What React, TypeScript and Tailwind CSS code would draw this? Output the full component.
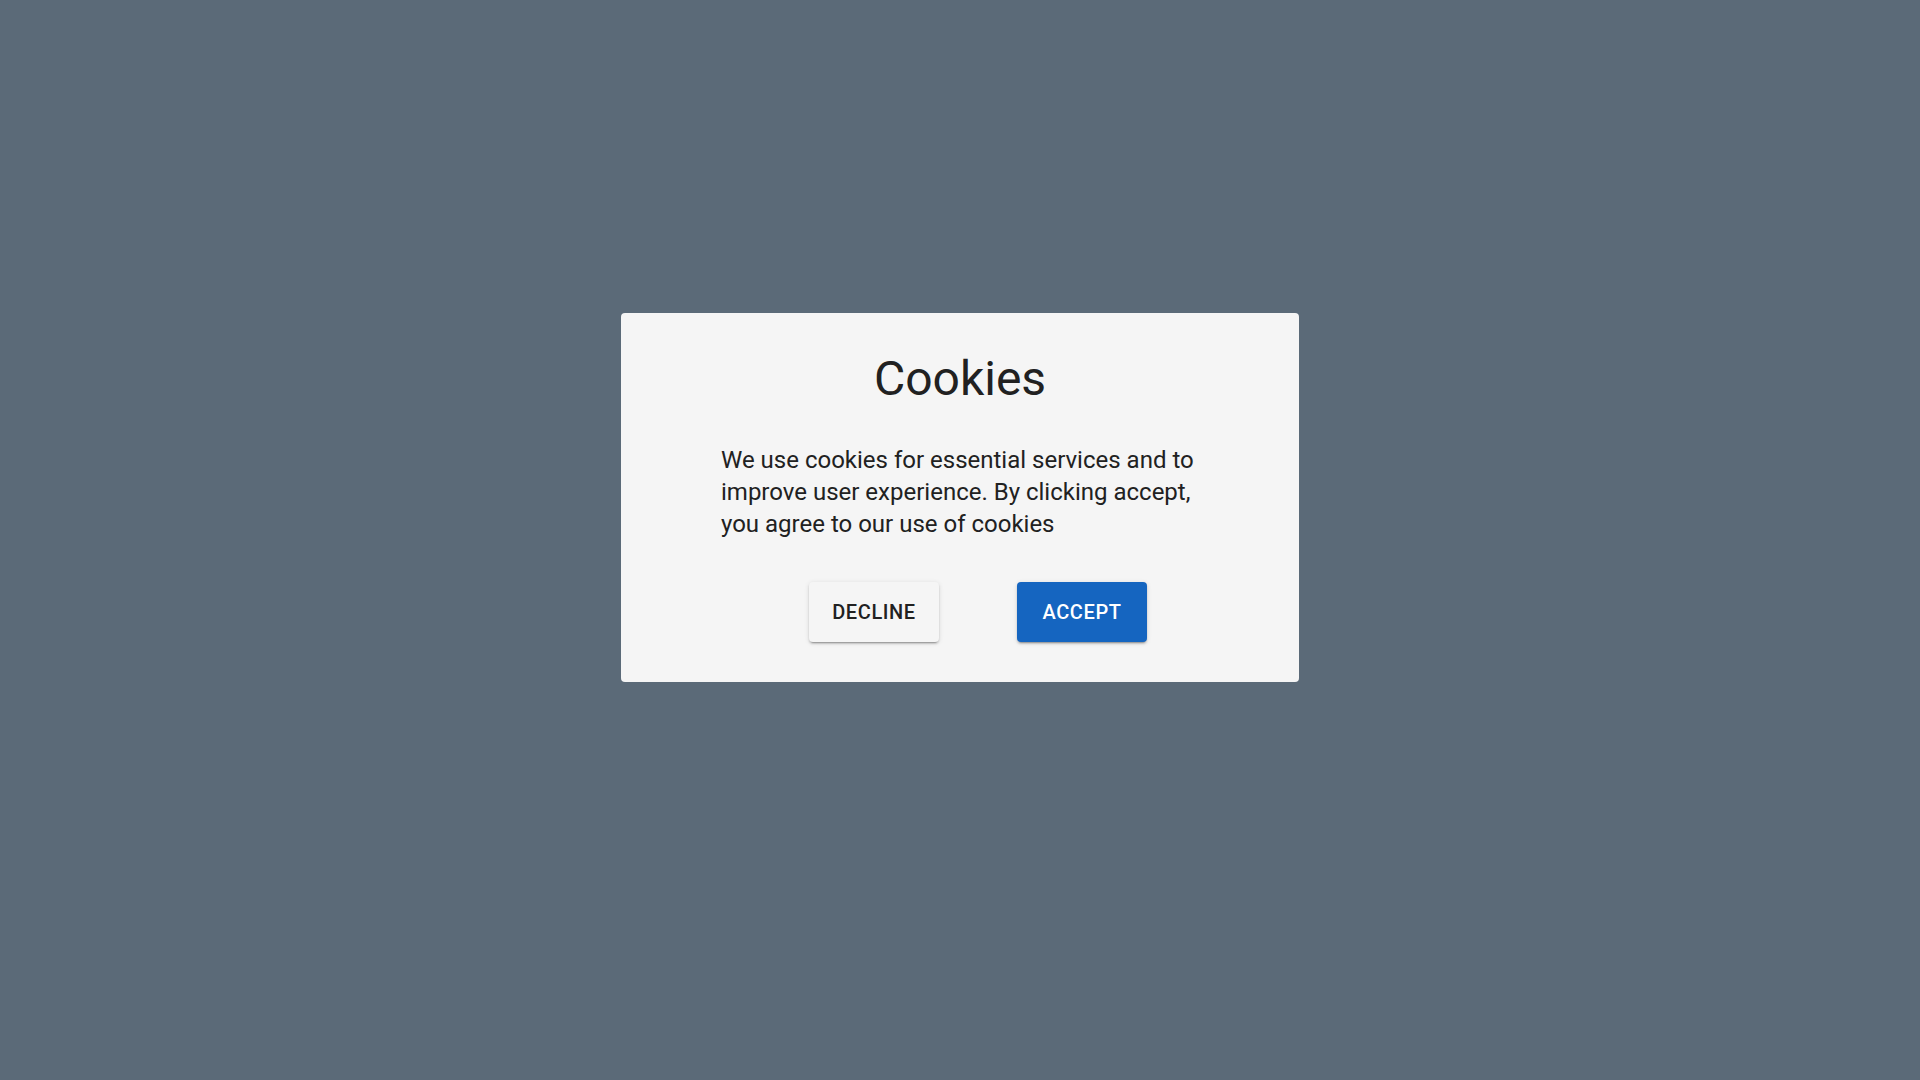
export default function App() {
  return (
    <div className="min-h-screen bg-[#5b6a78] flex justify-center pt-[313px] font-['Roboto',sans-serif]">
      <div className="w-[678px] h-[369px] bg-[#f5f5f5] rounded-[4px] pt-[38px] pb-[40px]">
        <h1 className="text-[48px] leading-[56px] font-normal text-center text-[#212121]">
          Cookies
        </h1>

        <p className="mt-[37px] ml-[100px] w-[490px] text-[24px] leading-[32px] text-[#212121]">
          We use cookies for essential services and to improve user experience. By clicking
          accept, you agree to our use of cookies
        </p>

        <div className="mt-[42px] pl-[36px] flex justify-center gap-[78px]">
          <button className="w-[130px] h-[60px] rounded-[4px] bg-[#f5f5f5] text-[#212121] text-[20px] font-medium tracking-[0.03em] uppercase shadow-[0_3px_1px_-2px_rgba(0,0,0,0.2),0_2px_2px_0_rgba(0,0,0,0.14),0_1px_5px_0_rgba(0,0,0,0.12)]">
            Decline
          </button>
          <button className="w-[130px] h-[60px] rounded-[4px] bg-[#1565c0] text-white text-[20px] font-medium tracking-[0.03em] uppercase shadow-[0_3px_1px_-2px_rgba(0,0,0,0.2),0_2px_2px_0_rgba(0,0,0,0.14),0_1px_5px_0_rgba(0,0,0,0.12)]">
            Accept
          </button>
        </div>
      </div>
    </div>
  )
}
